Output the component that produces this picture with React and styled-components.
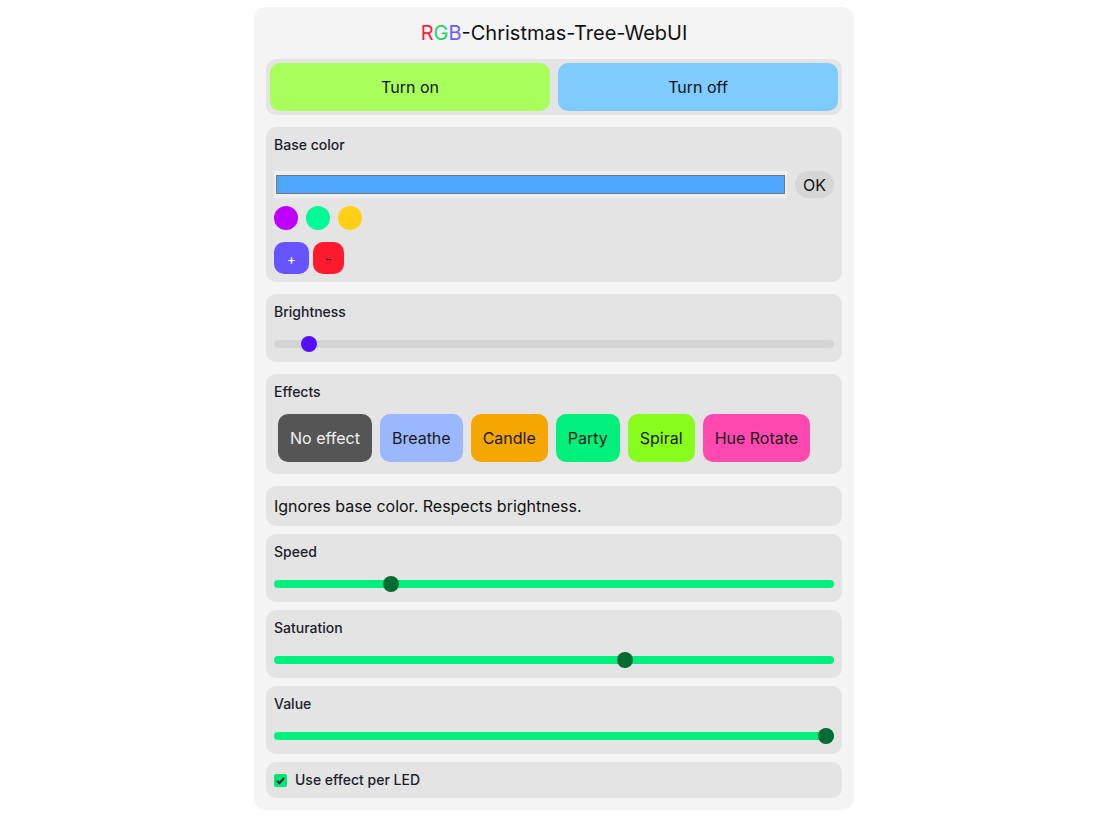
import React from 'react'
import styled, { createGlobalStyle } from 'styled-components'

const GlobalStyle = createGlobalStyle`
    body {
        margin: 0;
        padding: 7px 1px 7px 0;
        background: #ffffff;
        font-family: Inter, "Noto Sans", sans-serif;
        color: #111;
    }
`

const effects = [
    { name: 'No effect', bg: '#555555', fg: '#f2f2f2' },
    { name: 'Breathe', bg: '#9bb8ff' },
    { name: 'Candle', bg: '#f5a600' },
    { name: 'Party', bg: '#00f07b' },
    { name: 'Spiral', bg: '#88fc1c' },
    { name: 'Hue Rotate', bg: '#ff48b0' },
]

const swatches = ['#c000ff', '#00fa98', '#ffd015']

const Slider = ({ value, fill, thumb }) => (
    <Track fill={fill}>
        <Thumb thumb={thumb} style={{ left: `calc(${value} * (100% - 16px))` }}/>
    </Track>
)

export default function App() {
    return (
        <>
            <GlobalStyle/>
            <Card>
                <Title>
                    <Letter color="#ff1d3c">R</Letter>
                    <Letter color="#18d66c">G</Letter>
                    <Letter color="#6a5cff">B</Letter>
                    -Christmas-Tree-WebUI
                </Title>
                <PowerRow>
                    <PowerButton bg="#a8ff5c">Turn on</PowerButton>
                    <PowerButton bg="#7ecbff">Turn off</PowerButton>
                </PowerRow>

                <Section>
                    <Label>Base color</Label>
                    <ColorRow>
                        <ColorInput><ColorFill/></ColorInput>
                        <OkButton>OK</OkButton>
                    </ColorRow>
                    <Swatches>
                        {swatches.map(c => <Swatch key={c} color={c}/>)}
                    </Swatches>
                    <SmallButtons>
                        <SmallButton bg="#6655ff" fg="#fff" wide>+</SmallButton>
                        <SmallButton bg="#ff1a2e" fg="#111">-</SmallButton>
                    </SmallButtons>
                </Section>

                <Section>
                    <Label>Brightness</Label>
                    <Slider value={0.05} fill="#d4d4d4" thumb="#5510ff"/>
                </Section>

                <Section>
                    <Label>Effects</Label>
                    <EffectRow>
                        {effects.map(e => (
                            <EffectButton key={e.name} bg={e.bg} fg={e.fg}>{e.name}</EffectButton>
                        ))}
                    </EffectRow>
                </Section>

                <EffectSettings>
                    <Section>
                        <Description>Ignores base color. Respects brightness.</Description>
                    </Section>
                    <Section>
                        <Label>Speed</Label>
                        <Slider value={0.2} fill="#00f07e" thumb="#006b33"/>
                    </Section>
                    <Section>
                        <Label>Saturation</Label>
                        <Slider value={0.63} fill="#00f07e" thumb="#006b33"/>
                    </Section>
                    <Section>
                        <Label>Value</Label>
                        <Slider value={1} fill="#00f07e" thumb="#006b33"/>
                    </Section>
                    <Section>
                        <CheckRow>
                            <Checkbox>
                                <svg width="13" height="13" viewBox="0 0 13 13">
                                    <path d="M3 6.8 L5.4 9.2 L10 3.8" fill="none" stroke="#2a2a2a" strokeWidth="2"/>
                                </svg>
                            </Checkbox>
                            <Label>Use effect per LED</Label>
                        </CheckRow>
                    </Section>
                </EffectSettings>
            </Card>
        </>
    )
}

const Card = styled.div`
    width: 600px;
    box-sizing: border-box;
    margin: 0 auto;
    padding: 12px;
    background: #f4f4f4;
    border-radius: 12px;
    display: flex;
    flex-direction: column;
    gap: 12px;
`

const Title = styled.h1`
    margin: 0;
    font-size: 20px;
    font-weight: 400;
    line-height: 28px;
    text-align: center;
    color: #111;
`

const Letter = styled.span`
    color: ${props => props.color};
`

const PowerRow = styled.div`
    display: flex;
    gap: 8px;
    padding: 4px;
    background: #e4e4e4;
    border-radius: 10px;
`

const PowerButton = styled.button`
    flex: 1;
    height: 48px;
    border: none;
    border-radius: 10px;
    background: ${props => props.bg};
    font-family: inherit;
    font-size: 16px;
    color: #111;
`

const Section = styled.div`
    display: flex;
    flex-direction: column;
    padding: 8px;
    background: #e4e4e4;
    border-radius: 10px;
`

const Label = styled.div`
    font-size: 14px;
    line-height: 20px;
    font-weight: 500;
    color: #1c1c2c;
`

const ColorRow = styled.div`
    display: flex;
    align-items: center;
    gap: 8px;
    margin-top: 16px;
`

const ColorInput = styled.div`
    flex: 1;
    height: 27px;
    box-sizing: border-box;
    padding: 4px 2px;
    background: #efefef;
`

const ColorFill = styled.div`
    height: 100%;
    box-sizing: border-box;
    border: 1px solid #777;
    background: #4fa6ff;
`

const OkButton = styled.button`
    height: 27px;
    padding: 0 8px;
    border: none;
    border-radius: 14px;
    background: #d6d6d6;
    font-family: inherit;
    font-size: 16px;
    color: #111;
`

const Swatches = styled.div`
    display: flex;
    gap: 8px;
    margin-top: 8px;
`

const Swatch = styled.div`
    width: 24px;
    height: 24px;
    border-radius: 50%;
    background: ${props => props.color};
`

const SmallButtons = styled.div`
    display: flex;
    gap: 4px;
    margin-top: 12px;
`

const SmallButton = styled.button`
    width: ${props => props.wide ? '35px' : '31px'};
    height: 32px;
    padding: 0;
    border: none;
    border-radius: 10px;
    background: ${props => props.bg};
    color: ${props => props.fg};
    font-family: inherit;
    font-size: 14px;
`

const Track = styled.div`
    position: relative;
    height: 8px;
    margin: 18px 0 6px;
    border-radius: 4px;
    background: ${props => props.fill};
`

const Thumb = styled.div`
    position: absolute;
    top: -4px;
    width: 16px;
    height: 16px;
    border-radius: 50%;
    background: ${props => props.thumb};
`

const EffectRow = styled.div`
    display: flex;
    flex-wrap: wrap;
    padding: 4px 0;
    margin-top: 8px;
`

const EffectButton = styled.button`
    height: 48px;
    margin: 0 4px;
    padding: 0 12px;
    border: none;
    border-radius: 10px;
    background: ${props => props.bg};
    color: ${props => props.fg || '#1a1a1a'};
    font-family: inherit;
    font-size: 16px;
`

const EffectSettings = styled.div`
    display: flex;
    flex-direction: column;
    gap: 8px;
`

const Description = styled.div`
    font-size: 16px;
    line-height: 24px;
    color: #111;
`

const CheckRow = styled.label`
    display: flex;
    align-items: center;
    gap: 8px;
`

const Checkbox = styled.span`
    width: 13px;
    height: 13px;
    border-radius: 2px;
    background: #00e676;
    display: flex;
`
